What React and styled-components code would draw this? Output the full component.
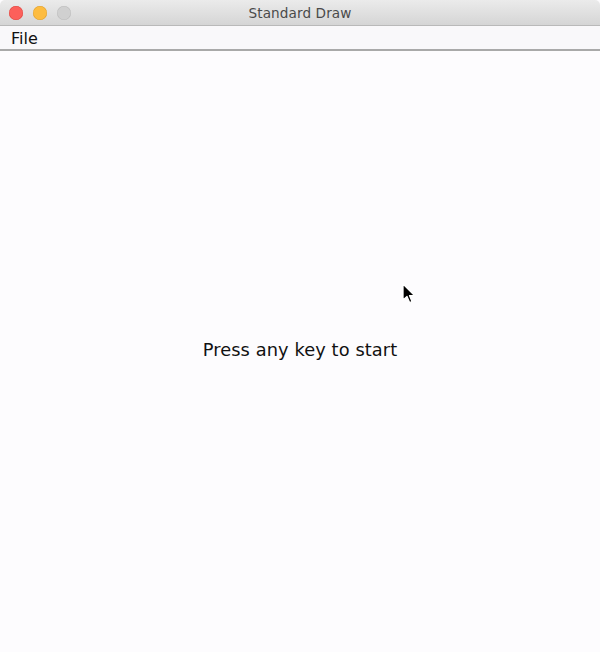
import React from "react";
import styled, { createGlobalStyle } from "styled-components";

const Global = createGlobalStyle`
  html, body { margin: 0; padding: 0; background: #fdfcfe; }
  body { font-family: "DejaVu Sans", "Liberation Sans", sans-serif; }
`;

const Window = styled.div`
  width: 600px;
  height: 652px;
  display: flex;
  flex-direction: column;
  background: #fdfcfe;
  overflow: hidden;
  position: relative;
`;

const TitleBar = styled.div`
  height: 25px;
  flex: 0 0 auto;
  position: relative;
  display: flex;
  align-items: center;
  justify-content: center;
  background: linear-gradient(#ebebeb, #d5d5d5);
  border-bottom: 1px solid #b9b9b9;
  border-radius: 5px 5px 0 0;
`;

const Lights = styled.div`
  position: absolute;
  left: 9px;
  top: 6px;
  display: flex;
  gap: 10px;
`;

const Light = styled.span`
  width: 14px;
  height: 14px;
  border-radius: 50%;
  background: ${(p) => p.$color};
  box-shadow: inset 0 0 0 0.5px ${(p) => p.$edge};
`;

const Title = styled.div`
  font-family: "DejaVu Sans", "Liberation Sans", sans-serif;
  font-size: 13.6px;
  color: #4a4a4a;
  letter-spacing: 0.1px;
`;

const MenuBar = styled.div`
  height: 23px;
  flex: 0 0 auto;
  display: flex;
  align-items: center;
  padding-left: 11px;
  background: #f9f8fa;
  border-bottom: 2px solid #a9a9a9;
`;

const MenuItem = styled.div`
  font-size: 16px;
  color: #111;
  padding-top: 2px;
`;

const Canvas = styled.div`
  flex: 1;
  display: flex;
  align-items: center;
  justify-content: center;
  background: #fdfcfe;
  padding-bottom: 4px;
`;

const Message = styled.div`
  font-family: "DejaVu Sans", sans-serif;
  font-size: 17.8px;
  color: #111;
  letter-spacing: 0.1px;
`;

const Cursor = styled.svg`
  position: absolute;
  left: 400px;
  top: 281px;
`;

export default function App() {
  return (
    <>
      <Global />
      <Window>
        <TitleBar>
          <Lights>
            <Light $color="#fc605b" $edge="#de4a44" />
            <Light $color="#fdbc40" $edge="#dea236" />
            <Light $color="#d0d0d0" $edge="#bdbdbd" />
          </Lights>
          <Title>Standard Draw</Title>
        </TitleBar>
        <MenuBar>
          <MenuItem>File</MenuItem>
        </MenuBar>
        <Canvas>
          <Message>Press any key to start</Message>
        </Canvas>
        <Cursor width="18" height="24" viewBox="0 0 18 24">
          <path
            d="M3 3 L3 19 L7 15.5 L9.6 21.5 L12 20.5 L9.5 14.6 L14.5 14.6 Z"
            fill="#000"
            stroke="#fff"
            strokeWidth="1.3"
            strokeLinejoin="round"
          />
        </Cursor>
      </Window>
    </>
  );
}
